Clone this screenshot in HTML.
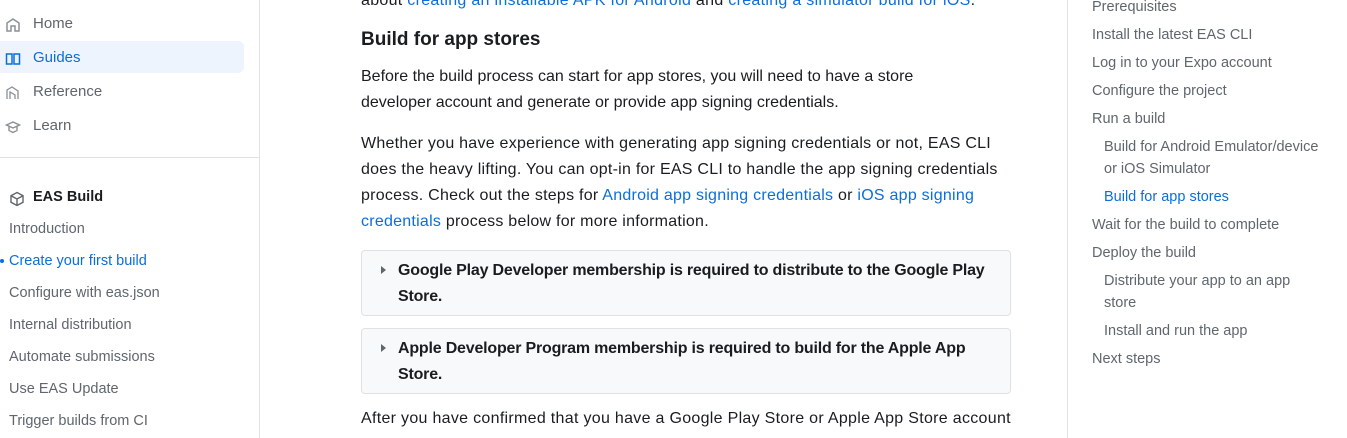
<!DOCTYPE html>
<html><head><style>
*{margin:0;padding:0;box-sizing:border-box}
body{width:1347px;height:438px;overflow:hidden;background:#fff;font-family:"Liberation Sans",sans-serif;color:#1a1d1f;position:relative}
.abs{position:absolute;white-space:nowrap}
.nav{position:absolute;left:0;width:260px;height:438px;border-right:1px solid #e1e3e5}
.ni{position:absolute;left:5px;font-size:15px;color:#60666d;white-space:nowrap}
.ni svg{position:absolute;left:0;top:2px}
.ni span{position:absolute;left:28px;top:0;white-space:nowrap}
.sub{position:absolute;left:9px;font-size:14.5px;color:#60666d;white-space:nowrap}
a{color:#0a6edb;text-decoration:none}
.p{position:absolute;left:361px;font-size:16px;line-height:26px;color:#1a1d1f;white-space:nowrap}
.box{position:absolute;left:361px;width:650px;height:66px;border:1px solid #dfe2e5;border-radius:4px;background:#f8f9fa}
.box .t{position:absolute;left:36px;top:7px;font-size:16px;line-height:26px;font-weight:bold;color:#1a1d1f;letter-spacing:-0.2px;white-space:nowrap}
.box .tri{position:absolute;left:19px;top:15px;width:0;height:0;border-left:5px solid #60666d;border-top:4px solid transparent;border-bottom:4px solid transparent}
.toc{position:absolute;left:1067px;top:0;width:280px;height:438px;border-left:1px solid #e1e3e5}
.tc{position:absolute;font-size:14.5px;color:#60666d;white-space:nowrap}
</style></head><body>
<div class="nav">
 <div class="ni" style="top:15px"><svg width="16" height="16" viewBox="0 0 16 16" fill="none" stroke="#8a9096" stroke-width="1.5"><path d="M2 14V6l6-4 6 4v8h-4V9H6v5z"/></svg><span>Home</span></div>
 <div style="position:absolute;left:0;top:41px;width:244px;height:32px;background:#edf4fe;border-radius:0 6px 6px 0"></div>
 <div class="ni" style="top:49px;color:#0a6edb"><svg width="16" height="16" viewBox="0 0 16 16" fill="none" stroke="#0a6edb" stroke-width="1.5"><path d="M1.5 3h5.5v10H1.5zM9 3h5.5v10H9z"/></svg><span>Guides</span></div>
 <div class="ni" style="top:83px"><svg width="16" height="16" viewBox="0 0 16 16" fill="none" stroke="#8a9096" stroke-width="1.3"><path d="M2 14V5l5-3 6 4v8M5 14V7l5 3v4"/></svg><span>Reference</span></div>
 <div class="ni" style="top:117px"><svg width="16" height="16" viewBox="0 0 16 16" fill="none" stroke="#8a9096" stroke-width="1.4"><path d="M1.5 6L8 3l6.5 3L8 9zM4 7.5v4l4 2 4-2v-4"/></svg><span>Learn</span></div>
 <div style="position:absolute;left:0;top:157px;width:260px;border-top:1px solid #dfe2e5"></div>
 <div class="ni" style="top:189px;left:9px;color:#1a1d1f;font-weight:bold;font-size:14.5px"><svg width="16" height="16" viewBox="0 0 16 16" fill="none" stroke="#60666d" stroke-width="1.4"><path d="M8 1.5l6 3.2v6.6L8 14.5 2 11.3V4.7zM2 4.7l6 3.3 6-3.3M8 8v6.5"/></svg><span style="left:24px">EAS Build</span></div>
 <div class="sub" style="top:221px">Introduction</div>
 <div style="position:absolute;left:0;top:259px;width:4px;height:4px;border-radius:2px;background:#0a6edb"></div>
 <div class="sub" style="top:253px;color:#0a6edb">Create your first build</div>
 <div class="sub" style="top:285px">Configure with eas.json</div>
 <div class="sub" style="top:317px">Internal distribution</div>
 <div class="sub" style="top:349px">Automate submissions</div>
 <div class="sub" style="top:381px">Use EAS Update</div>
 <div class="sub" style="top:413px">Trigger builds from CI</div>
</div>

<div class="p" style="top:-12px;letter-spacing:0.3px">about <a>creating an installable APK for Android</a> and <a>creating a simulator build for iOS</a>.</div>
<div class="abs" style="left:361px;top:29px;font-size:19px;font-weight:bold;color:#1a1d1f">Build for app stores</div>
<div class="p" style="top:64px">Before the build process can start for app stores, you will need to have a store<br>developer account and generate or provide app signing credentials.</div>
<div class="p" style="top:131px;letter-spacing:0.25px">Whether you have experience with generating app signing credentials or not, EAS CLI<br>does the heavy lifting. You can opt-in for EAS CLI to handle the app signing credentials<br>process. Check out the steps for <a>Android app signing credentials</a> or <a>iOS app signing</a><br><a>credentials</a> process below for more information.</div>
<div class="box" style="top:250px"><div class="tri"></div><div class="t">Google Play Developer membership is required to distribute to the Google Play<br>Store.</div></div>
<div class="box" style="top:328px"><div class="tri"></div><div class="t">Apple Developer Program membership is required to build for the Apple App<br>Store.</div></div>
<div class="p" style="top:406px;letter-spacing:0.3px">After you have confirmed that you have a Google Play Store or Apple App Store account</div>

<div class="toc">
 <div class="tc" style="left:24px;top:-1px">Prerequisites</div>
 <div class="tc" style="left:24px;top:27px">Install the latest EAS CLI</div>
 <div class="tc" style="left:24px;top:55px">Log in to your Expo account</div>
 <div class="tc" style="left:24px;top:83px">Configure the project</div>
 <div class="tc" style="left:24px;top:111px">Run a build</div>
 <div class="tc" style="left:36px;top:139px">Build for Android Emulator/device</div>
 <div class="tc" style="left:36px;top:161px">or iOS Simulator</div>
 <div class="tc" style="left:36px;top:189px;color:#0a6edb">Build for app stores</div>
 <div class="tc" style="left:24px;top:217px">Wait for the build to complete</div>
 <div class="tc" style="left:24px;top:245px">Deploy the build</div>
 <div class="tc" style="left:36px;top:273px">Distribute your app to an app</div>
 <div class="tc" style="left:36px;top:295px">store</div>
 <div class="tc" style="left:36px;top:323px">Install and run the app</div>
 <div class="tc" style="left:24px;top:351px">Next steps</div>
</div>
</body></html>
